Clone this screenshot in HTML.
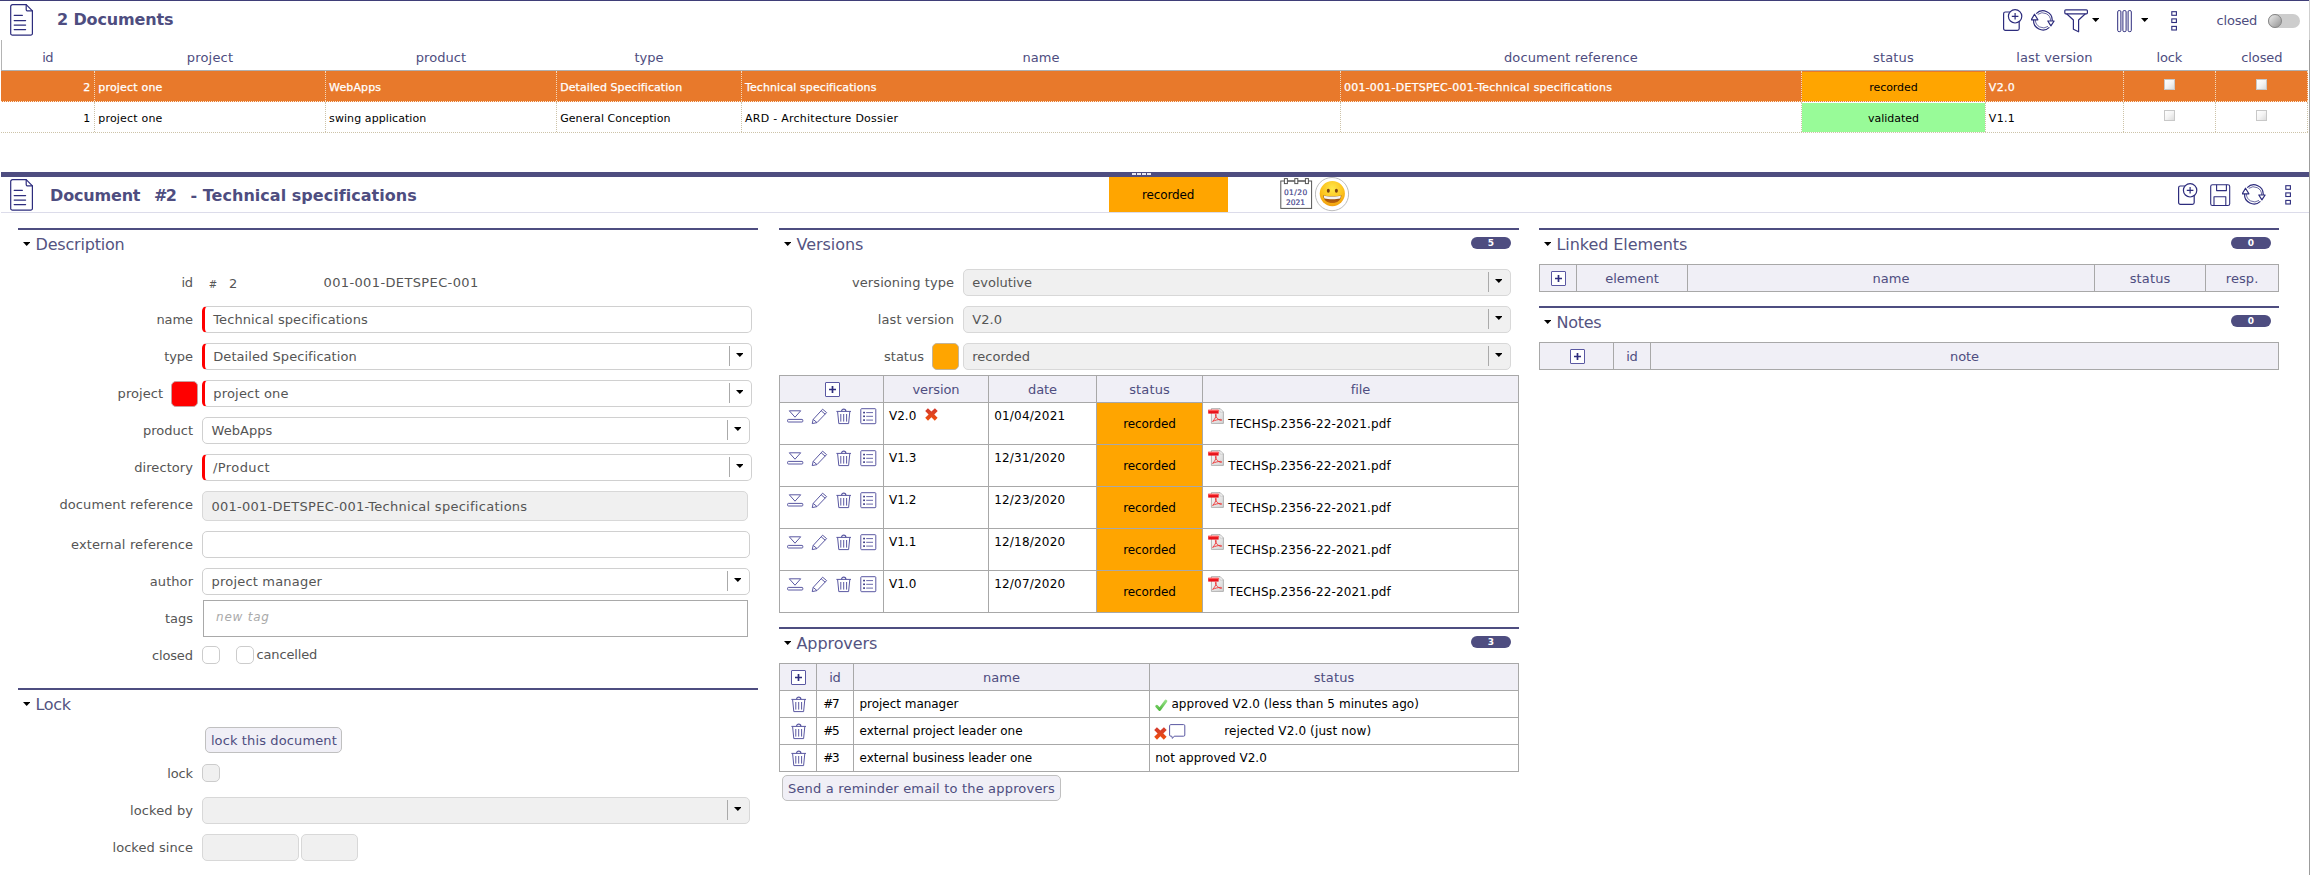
<!DOCTYPE html>
<html lang="en"><head><meta charset="utf-8"><title>Documents</title>
<style>
html,body{margin:0;padding:0;background:#fff;}
body{width:2310px;height:875px;position:relative;overflow:hidden;font-family:"DejaVu Sans","Liberation Sans",sans-serif;}
.t{position:absolute;white-space:pre;}
div,.a{position:absolute;box-sizing:border-box;}
.inp{border:1px solid #d0d0d0;border-radius:5px;background:#fff;}
.req{border-left:3px solid #f00;}
.ro{background:#f0f0f0;border-color:#d8d8d8;}
.sep{width:1px;background:#aaa;}
.arr{width:0;height:0;border-left:4px solid transparent;border-right:4px solid transparent;border-top:4px solid #000;}
.bar{background:#4e4d80;}
.badge{background:#4e4d80;border-radius:7px;color:#fff;font-size:9px;font-weight:bold;text-align:center;line-height:12px;}
.cell{border:1px solid #a6a6a6;background:#fff;}
.hd{background:#f0eff6;}
.btn{background:#f0eff6;border:1px solid #c0c0c0;border-radius:5px;}
.cb{border:1px solid #ccc;border-radius:5px;background:#fff;}
.lcb{border:1px solid #c8c8c8;background:linear-gradient(135deg,#fff 0%,#f4f4f4 50%,#dcdcdc 100%);}
</style></head><body>
<section aria-label="Documents list">
<div style="left:0px;top:0px;width:2309px;height:1px;background:#3f3e78;"></div>
<div style="left:2309px;top:0px;width:1px;height:40px;background:#cfcfcf;"></div>
<div style="left:2309px;top:40px;width:1px;height:835px;background:#9c9c9c;"></div>
<svg class="a" style="left:10px;top:4px" width="24" height="33" viewBox="0 0 24 33" ><g fill="none" stroke="#2d2c7d" stroke-width="1.2" stroke-linejoin="round" stroke-linecap="round">
<path d="M2.5,0.7H16.2L22.4,6.9V29.4a1.8,1.8 0 0 1 -1.8,1.8H2.5A1.8,1.8 0 0 1 0.7,29.4V2.5A1.8,1.8 0 0 1 2.5,0.7Z"/>
<path d="M16.2,0.7V5.4a1.5,1.5 0 0 0 1.5,1.5H22.4"/>
<path d="M4.2,11.3H12.4M4.2,16.6H15.6M4.2,21.1H15.6M4.2,25.6H15.6"/></g></svg>
<span class="t" style="left:57.0px;top:9px;font-size:16px;line-height:21px;color:#4e4d80;letter-spacing:-0.15px;font-weight:bold;">2 Documents</span>
<svg class="a" style="left:2002.8px;top:8.6px" width="21" height="24" viewBox="0 0 21 24" ><g fill="none" stroke="#2d2c7d" stroke-width="1.2">
<rect x="0.6" y="3" width="15.6" height="18.4" rx="1.8"/>
<circle cx="12.1" cy="7.3" r="6.7" fill="#fff"/>
<path d="M8.8,7.3H15.4M12.1,4V10.6"/></g></svg>
<svg class="a" style="left:2031px;top:9px" width="25" height="24" viewBox="0 0 25 24" ><g fill="none" stroke="#2d2c7d" stroke-width="1.2" stroke-linejoin="round">
<path d="M5.2,4.6A9.4,9.4 0 0 1 21.2,12"/>
<path d="M6.8,5.4A8,8 0 0 1 19.6,12" stroke-width="0.7"/>
<path d="M16.8,12H23.1L19.9,16.8Z" fill="#fff"/>
<path d="M18.4,18.4A9.4,9.4 0 0 1 2.6,10.8"/>
<path d="M17,17.4A8,8 0 0 1 4.4,10.8" stroke-width="0.7"/>
<path d="M0.3,10.8H6.9L3.5,5.2Z" fill="#fff"/></g></svg>
<svg class="a" style="left:2064.2px;top:9.3px" width="25" height="24" viewBox="0 0 25 24" ><g fill="none" stroke="#2d2c7d" stroke-width="1.2" stroke-linejoin="round">
<rect x="0.8" y="0.8" width="22.6" height="4" rx="1"/>
<path d="M2.6,4.8L9.4,11V20.2L14.6,22.8V11L21.4,4.8"/></g></svg>
<svg class="a" style="left:2092px;top:18.2px" width="7.4" height="3.9" viewBox="0 0 7.4 3.9" ><path d="M0,0H7.4L3.7,3.9Z" fill="#000"/></svg>
<svg class="a" style="left:2117.2px;top:10px" width="16" height="23" viewBox="0 0 16 23" ><g fill="none" stroke="#2d2c7d" stroke-width="1">
<rect x="0.7" y="0.6" width="3.2" height="21" rx="1.2"/><rect x="5.9" y="0.6" width="3.2" height="21" rx="1.2"/><rect x="11.1" y="0.6" width="3.2" height="21" rx="1.2"/></g></svg>
<svg class="a" style="left:2141px;top:18.2px" width="7.4" height="3.9" viewBox="0 0 7.4 3.9" ><path d="M0,0H7.4L3.7,3.9Z" fill="#000"/></svg>
<svg class="a" style="left:2170.6px;top:10.6px" width="7" height="21" viewBox="0 0 7 21" ><g fill="none" stroke="#2d2c7d" stroke-width="1.1">
<rect x="0.8" y="0.7" width="4.6" height="3.6"/><rect x="0.8" y="7.9" width="4.6" height="3.6"/><rect x="0.8" y="15.4" width="4.6" height="3.6"/></g></svg>
<span class="t" style="left:2216.5px;top:12px;font-size:13px;line-height:17px;color:#4e4d80;letter-spacing:-0.19px;">closed</span>
<div style="left:2268px;top:14px;width:32px;height:14px;background:#cdcdcd;border-radius:7px;"></div>
<div style="left:2268px;top:14px;width:14px;height:14px;border-radius:7px;background:linear-gradient(135deg,#e4e4e4 10%,#9c9c9c 90%);border:1px solid #858585;"></div>
<div style="left:1px;top:40px;width:1px;height:31px;background:#b4b4b4;"></div>
<div style="left:1px;top:70px;width:2307px;height:1px;background:#b0b0b0;"></div>
<span class="t" style="left:42.2px;top:49px;font-size:13px;line-height:17px;color:#4e4d80;letter-spacing:-0.46px;">id</span>
<span class="t" style="left:186.8px;top:49px;font-size:13px;line-height:17px;color:#4e4d80;letter-spacing:0.18px;">project</span>
<span class="t" style="left:415.8px;top:49px;font-size:13px;line-height:17px;color:#4e4d80;letter-spacing:0.03px;">product</span>
<span class="t" style="left:634.4px;top:49px;font-size:13px;line-height:17px;color:#4e4d80;letter-spacing:0.02px;">type</span>
<span class="t" style="left:1022.4px;top:49px;font-size:13px;line-height:17px;color:#4e4d80;letter-spacing:0.04px;">name</span>
<span class="t" style="left:1504.0px;top:49px;font-size:13px;line-height:17px;color:#4e4d80;letter-spacing:0.12px;">document reference</span>
<span class="t" style="left:1873.1px;top:49px;font-size:13px;line-height:17px;color:#4e4d80;letter-spacing:0.13px;">status</span>
<span class="t" style="left:2016.3px;top:49px;font-size:13px;line-height:17px;color:#4e4d80;letter-spacing:0.09px;">last version</span>
<span class="t" style="left:2156.4px;top:49px;font-size:13px;line-height:17px;color:#4e4d80;letter-spacing:-0.08px;">lock</span>
<span class="t" style="left:2241.2px;top:49px;font-size:13px;line-height:17px;color:#4e4d80;letter-spacing:-0.09px;">closed</span>
<div style="left:1px;top:71px;width:2307px;height:31px;background:#e8792b;"></div>
<div style="left:1802px;top:72px;width:183px;height:29px;background:#ffa500;"></div>
<div style="left:1802px;top:103px;width:183px;height:29px;background:#98fb98;"></div>
<div style="left:1px;top:101px;width:2307px;height:1px;border-top:1px dotted #fbe9d8;"></div>
<div style="left:1px;top:132px;width:2307px;height:1px;border-top:1px dotted #cdc3a8;"></div>
<div style="left:94px;top:71px;width:1px;height:30px;border-left:1px dotted #f3d9bd;"></div>
<div style="left:94px;top:102px;width:1px;height:30px;border-left:1px dotted #cdc3a8;"></div>
<div style="left:325px;top:71px;width:1px;height:30px;border-left:1px dotted #f3d9bd;"></div>
<div style="left:325px;top:102px;width:1px;height:30px;border-left:1px dotted #cdc3a8;"></div>
<div style="left:556px;top:71px;width:1px;height:30px;border-left:1px dotted #f3d9bd;"></div>
<div style="left:556px;top:102px;width:1px;height:30px;border-left:1px dotted #cdc3a8;"></div>
<div style="left:741px;top:71px;width:1px;height:30px;border-left:1px dotted #f3d9bd;"></div>
<div style="left:741px;top:102px;width:1px;height:30px;border-left:1px dotted #cdc3a8;"></div>
<div style="left:1340px;top:71px;width:1px;height:30px;border-left:1px dotted #f3d9bd;"></div>
<div style="left:1340px;top:102px;width:1px;height:30px;border-left:1px dotted #cdc3a8;"></div>
<div style="left:1801px;top:71px;width:1px;height:30px;border-left:1px dotted #f3d9bd;"></div>
<div style="left:1801px;top:102px;width:1px;height:30px;border-left:1px dotted #cdc3a8;"></div>
<div style="left:1985px;top:71px;width:1px;height:30px;border-left:1px dotted #f3d9bd;"></div>
<div style="left:1985px;top:102px;width:1px;height:30px;border-left:1px dotted #cdc3a8;"></div>
<div style="left:2123px;top:71px;width:1px;height:30px;border-left:1px dotted #f3d9bd;"></div>
<div style="left:2123px;top:102px;width:1px;height:30px;border-left:1px dotted #cdc3a8;"></div>
<div style="left:2215px;top:71px;width:1px;height:30px;border-left:1px dotted #f3d9bd;"></div>
<div style="left:2215px;top:102px;width:1px;height:30px;border-left:1px dotted #cdc3a8;"></div>
<div style="left:2307px;top:102px;width:1px;height:30px;border-left:1px dotted #cdc3a8;"></div>
<div style="left:2307px;top:71px;width:1px;height:30px;border-left:1px dotted #f3d9bd;"></div>
<span class="t" style="left:83.3px;top:81px;font-size:11px;line-height:14px;color:#ffffff;-webkit-text-stroke:0.25px #fff;">2</span>
<span class="t" style="left:98.3px;top:81px;font-size:11px;line-height:14px;color:#ffffff;letter-spacing:0.19px;-webkit-text-stroke:0.25px #fff;">project one</span>
<span class="t" style="left:329.1px;top:81px;font-size:11px;line-height:14px;color:#ffffff;letter-spacing:0.13px;-webkit-text-stroke:0.25px #fff;">WebApps</span>
<span class="t" style="left:560.2px;top:81px;font-size:11px;line-height:14px;color:#ffffff;letter-spacing:0.08px;-webkit-text-stroke:0.25px #fff;">Detailed Specification</span>
<span class="t" style="left:745.0px;top:81px;font-size:11px;line-height:14px;color:#ffffff;letter-spacing:0.10px;-webkit-text-stroke:0.25px #fff;">Technical specifications</span>
<span class="t" style="left:1343.9px;top:81px;font-size:11px;line-height:14px;color:#ffffff;letter-spacing:0.25px;-webkit-text-stroke:0.25px #fff;">001-001-DETSPEC-001-Technical specifications</span>
<span class="t" style="left:1869.3px;top:81px;font-size:11px;line-height:14px;color:#000000;letter-spacing:-0.07px;">recorded</span>
<span class="t" style="left:1988.8px;top:81px;font-size:11px;line-height:14px;color:#ffffff;letter-spacing:0.33px;-webkit-text-stroke:0.25px #fff;">V2.0</span>
<span class="t" style="left:83.3px;top:112px;font-size:11px;line-height:14px;color:#000000;">1</span>
<span class="t" style="left:98.3px;top:112px;font-size:11px;line-height:14px;color:#000000;letter-spacing:0.19px;">project one</span>
<span class="t" style="left:329.1px;top:112px;font-size:11px;line-height:14px;color:#000000;letter-spacing:0.08px;">swing application</span>
<span class="t" style="left:560.2px;top:112px;font-size:11px;line-height:14px;color:#000000;letter-spacing:0.07px;">General Conception</span>
<span class="t" style="left:745.0px;top:112px;font-size:11px;line-height:14px;color:#000000;letter-spacing:0.26px;">ARD - Architecture Dossier</span>
<span class="t" style="left:1868.1px;top:112px;font-size:11px;line-height:14px;color:#000000;letter-spacing:-0.04px;">validated</span>
<span class="t" style="left:1988.8px;top:112px;font-size:11px;line-height:14px;color:#000000;letter-spacing:0.33px;">V1.1</span>
<div class="lcb" style="left:2164px;top:79px;width:11px;height:11px;"></div>
<div class="lcb" style="left:2256px;top:79px;width:11px;height:11px;"></div>
<div class="lcb" style="left:2164px;top:110px;width:11px;height:11px;"></div>
<div class="lcb" style="left:2256px;top:110px;width:11px;height:11px;"></div>
</section>
<section aria-label="Document detail header">
<div class="bar" style="left:1px;top:172px;width:2308px;height:5px;"></div>
<div style="left:1132px;top:173px;width:4px;height:2px;background:#e9e9f2;"></div>
<div style="left:1137px;top:173px;width:4px;height:2px;background:#e9e9f2;"></div>
<div style="left:1142px;top:173px;width:4px;height:2px;background:#e9e9f2;"></div>
<div style="left:1147px;top:173px;width:4px;height:2px;background:#e9e9f2;"></div>
<svg class="a" style="left:10px;top:179px" width="24" height="33" viewBox="0 0 24 33" ><g fill="none" stroke="#2d2c7d" stroke-width="1.2" stroke-linejoin="round" stroke-linecap="round">
<path d="M2.5,0.7H16.2L22.4,6.9V29.4a1.8,1.8 0 0 1 -1.8,1.8H2.5A1.8,1.8 0 0 1 0.7,29.4V2.5A1.8,1.8 0 0 1 2.5,0.7Z"/>
<path d="M16.2,0.7V5.4a1.5,1.5 0 0 0 1.5,1.5H22.4"/>
<path d="M4.2,11.3H12.4M4.2,16.6H15.6M4.2,21.1H15.6M4.2,25.6H15.6"/></g></svg>
<span class="t" style="left:50.1px;top:185px;font-size:16px;line-height:21px;color:#4e4d80;letter-spacing:-0.19px;font-weight:bold;">Document</span>
<span class="t" style="left:153.9px;top:185px;font-size:16px;line-height:21px;color:#4e4d80;letter-spacing:-1.44px;font-weight:bold;">#2</span>
<span class="t" style="left:190.5px;top:185px;font-size:16px;line-height:21px;color:#4e4d80;letter-spacing:0.03px;font-weight:bold;">- Technical specifications</span>
<div style="left:1109px;top:177px;width:119px;height:35px;background:#ffa500;"></div>
<span class="t" style="left:1142.1px;top:187px;font-size:12px;line-height:16px;color:#000000;letter-spacing:-0.16px;">recorded</span>
<svg class="a" style="left:1280px;top:177.6px" width="33" height="32" viewBox="0 0 33 32" ><g fill="#fff" stroke="#555" stroke-width="1">
<rect x="0.8" y="3" width="30.8" height="27.4"/>
<path d="M4.6,3H27.4" stroke="#555"/>
<rect x="4.4" y="0.6" width="3" height="5"/><rect x="14.8" y="0.6" width="3" height="5"/><rect x="25.4" y="0.6" width="3" height="5"/></g></svg>
<span class="t" style="left:1283.9px;top:188px;font-size:7.5px;line-height:10px;color:#45448c;letter-spacing:0.45px;-webkit-text-stroke:0.2px #45448c;">01/20</span>
<span class="t" style="left:1286.1px;top:198px;font-size:7.5px;line-height:10px;color:#45448c;letter-spacing:-0.03px;-webkit-text-stroke:0.2px #45448c;">2021</span>
<svg class="a" style="left:1315px;top:177px" width="35" height="35" viewBox="0 0 35 35" ><defs><radialGradient id="fg" cx="0.5" cy="0.3" r="0.8"><stop offset="0" stop-color="#ffe84a"/><stop offset="0.55" stop-color="#fcc21c"/><stop offset="1" stop-color="#ee9208"/></radialGradient>
<linearGradient id="mg" x1="0" y1="0" x2="0" y2="1"><stop offset="0" stop-color="#7a3d0c"/><stop offset="1" stop-color="#c0660e"/></linearGradient></defs>
<circle cx="17" cy="17.1" r="16.6" fill="#fff" stroke="#bdbdbd" stroke-width="1"/>
<circle cx="17.3" cy="16.6" r="12.6" fill="url(#fg)"/>
<ellipse cx="13.3" cy="13.7" rx="1.5" ry="2" fill="#7a4210"/><ellipse cx="21.4" cy="13.7" rx="1.5" ry="2" fill="#7a4210"/>
<path d="M8.2,18.2C11,19.6 23.6,19.6 26.4,18.2C26.2,23.2 22.3,26 17.3,26C12.3,26 8.4,23.2 8.2,18.2Z" fill="url(#mg)"/>
<path d="M8.7,18.6C11.4,19.9 23.2,19.9 25.9,18.6C25.8,19.8 25.6,20.6 25.2,21.4C21,22.4 13.6,22.4 9.4,21.4C9,20.6 8.8,19.8 8.7,18.6Z" fill="#f4f4f4"/></svg>
<svg class="a" style="left:2178.2px;top:182.6px" width="21" height="24" viewBox="0 0 21 24" ><g fill="none" stroke="#2d2c7d" stroke-width="1.2">
<rect x="0.6" y="3" width="15.6" height="18.4" rx="1.8"/>
<circle cx="12.1" cy="7.3" r="6.7" fill="#fff"/>
<path d="M8.8,7.3H15.4M12.1,4V10.6"/></g></svg>
<svg class="a" style="left:2210px;top:184px" width="21" height="23" viewBox="0 0 21 23" ><g fill="none" stroke="#2d2c7d" stroke-width="1.1" stroke-linejoin="round">
<rect x="0.7" y="0.7" width="19" height="20.8" rx="1.8"/>
<path d="M6.6,0.7V6.6H16.4V0.7"/><path d="M4,21.5V12.8H15.8V21.5"/></g></svg>
<svg class="a" style="left:2242px;top:183.2px" width="25" height="24" viewBox="0 0 25 24" ><g fill="none" stroke="#2d2c7d" stroke-width="1.2" stroke-linejoin="round">
<path d="M5.2,4.6A9.4,9.4 0 0 1 21.2,12"/>
<path d="M6.8,5.4A8,8 0 0 1 19.6,12" stroke-width="0.7"/>
<path d="M16.8,12H23.1L19.9,16.8Z" fill="#fff"/>
<path d="M18.4,18.4A9.4,9.4 0 0 1 2.6,10.8"/>
<path d="M17,17.4A8,8 0 0 1 4.4,10.8" stroke-width="0.7"/>
<path d="M0.3,10.8H6.9L3.5,5.2Z" fill="#fff"/></g></svg>
<svg class="a" style="left:2284.8px;top:185px" width="7" height="21" viewBox="0 0 7 21" ><g fill="none" stroke="#2d2c7d" stroke-width="1.1">
<rect x="0.8" y="0.7" width="4.6" height="3.6"/><rect x="0.8" y="7.9" width="4.6" height="3.6"/><rect x="0.8" y="15.4" width="4.6" height="3.6"/></g></svg>
<div style="left:1px;top:212px;width:2308px;height:1px;background:#dcdcea;"></div>
</section>
<section aria-label="Description">
<div class="bar" style="left:18px;top:228px;width:740px;height:2px;"></div>
<svg class="a" style="left:23px;top:242px" width="7.4" height="3.9" viewBox="0 0 7.4 3.9" ><path d="M0,0H7.4L3.7,3.9Z" fill="#000"/></svg>
<span class="t" style="left:35.5px;top:234px;font-size:16px;line-height:21px;color:#545381;letter-spacing:-0.19px;">Description</span>
<span class="t" style="left:181.5px;top:274px;font-size:13px;line-height:17px;color:#555555;letter-spacing:-0.36px;">id</span>
<span class="t" style="left:208.8px;top:278px;font-size:10px;line-height:13px;color:#555555;">#</span>
<span class="t" style="left:229.0px;top:275px;font-size:13px;line-height:17px;color:#555555;">2</span>
<span class="t" style="left:323.5px;top:274px;font-size:13px;line-height:17px;color:#555555;letter-spacing:0.37px;">001-001-DETSPEC-001</span>
<span class="t" style="left:156.4px;top:311px;font-size:13px;line-height:17px;color:#555555;letter-spacing:-0.09px;">name</span>
<div class="inp req" style="left:202px;top:306px;width:550px;height:27px;"></div>
<span class="t" style="left:213.3px;top:311px;font-size:13px;line-height:17px;color:#555555;letter-spacing:0.08px;">Technical specifications</span>
<span class="t" style="left:164.2px;top:348px;font-size:13px;line-height:17px;color:#555555;letter-spacing:-0.08px;">type</span>
<div class="inp req" style="left:202px;top:343px;width:550px;height:27px;"></div>
<div class="sep" style="left:729px;top:346px;width:1px;height:20px;"></div>
<svg class="a" style="left:735.6px;top:352.8px" width="7.6" height="4" viewBox="0 0 7.6 4" ><path d="M0,0H7.6L3.8,4Z" fill="#000"/></svg>
<span class="t" style="left:213.3px;top:348px;font-size:13px;line-height:17px;color:#555555;letter-spacing:0.06px;">Detailed Specification</span>
<span class="t" style="left:117.6px;top:385px;font-size:13px;line-height:17px;color:#555555;letter-spacing:0.05px;">project</span>
<div style="left:171px;top:381px;width:26.5px;height:26px;background:#f00;border:1px solid #c9a0a0;border-radius:5px;"></div>
<div class="inp req" style="left:202px;top:380px;width:550px;height:27px;"></div>
<div class="sep" style="left:729px;top:383px;width:1px;height:20px;"></div>
<svg class="a" style="left:735.6px;top:389.8px" width="7.6" height="4" viewBox="0 0 7.6 4" ><path d="M0,0H7.6L3.8,4Z" fill="#000"/></svg>
<span class="t" style="left:213.3px;top:385px;font-size:13px;line-height:17px;color:#555555;letter-spacing:0.18px;">project one</span>
<span class="t" style="left:142.9px;top:422px;font-size:13px;line-height:17px;color:#555555;letter-spacing:0.02px;">product</span>
<div class="inp" style="left:202px;top:417px;width:548px;height:27px;"></div>
<div class="sep" style="left:727px;top:420px;width:1px;height:20px;"></div>
<svg class="a" style="left:733.6px;top:426.8px" width="7.6" height="4" viewBox="0 0 7.6 4" ><path d="M0,0H7.6L3.8,4Z" fill="#000"/></svg>
<span class="t" style="left:211.6px;top:422px;font-size:13px;line-height:17px;color:#555555;letter-spacing:0.03px;">WebApps</span>
<span class="t" style="left:134.2px;top:459px;font-size:13px;line-height:17px;color:#555555;letter-spacing:0.08px;">directory</span>
<div class="inp req" style="left:202px;top:454px;width:550px;height:27px;"></div>
<div class="sep" style="left:729px;top:457px;width:1px;height:20px;"></div>
<svg class="a" style="left:735.6px;top:463.8px" width="7.6" height="4" viewBox="0 0 7.6 4" ><path d="M0,0H7.6L3.8,4Z" fill="#000"/></svg>
<span class="t" style="left:213.0px;top:459px;font-size:13px;line-height:17px;color:#555555;letter-spacing:0.41px;">/Product</span>
<span class="t" style="left:59.4px;top:496px;font-size:13px;line-height:17px;color:#555555;letter-spacing:0.11px;">document reference</span>
<div class="inp ro" style="left:202px;top:491px;width:546px;height:30px;"></div>
<span class="t" style="left:211.4px;top:498px;font-size:13px;line-height:17px;color:#555555;letter-spacing:0.27px;">001-001-DETSPEC-001-Technical specifications</span>
<span class="t" style="left:71.0px;top:536px;font-size:13px;line-height:17px;color:#555555;letter-spacing:0.14px;">external reference</span>
<div class="inp" style="left:202px;top:531px;width:548px;height:27px;"></div>
<span class="t" style="left:149.8px;top:573px;font-size:13px;line-height:17px;color:#555555;letter-spacing:0.07px;">author</span>
<div class="inp" style="left:202px;top:568px;width:548px;height:27px;"></div>
<div class="sep" style="left:727px;top:571px;width:1px;height:20px;"></div>
<svg class="a" style="left:733.6px;top:577.8px" width="7.6" height="4" viewBox="0 0 7.6 4" ><path d="M0,0H7.6L3.8,4Z" fill="#000"/></svg>
<span class="t" style="left:211.6px;top:573px;font-size:13px;line-height:17px;color:#555555;letter-spacing:0.19px;">project manager</span>
<span class="t" style="left:165.0px;top:610px;font-size:13px;line-height:17px;color:#555555;letter-spacing:-0.03px;">tags</span>
<div style="left:203px;top:600px;width:545px;height:37px;border:1px solid #a9a9a9;background:#fff;"></div>
<span class="t" style="left:216.0px;top:609px;font-size:12px;line-height:16px;color:#aaaaaa;letter-spacing:0.78px;font-style:italic;">new tag</span>
<span class="t" style="left:151.9px;top:647px;font-size:13px;line-height:17px;color:#555555;letter-spacing:-0.13px;">closed</span>
<div class="cb" style="left:202px;top:646px;width:18px;height:18px;"></div>
<div class="cb" style="left:236px;top:646px;width:18px;height:18px;"></div>
<span class="t" style="left:256.6px;top:646px;font-size:13px;line-height:17px;color:#555555;letter-spacing:-0.17px;">cancelled</span>
</section>
<section aria-label="Lock">
<div class="bar" style="left:18px;top:688px;width:740px;height:2px;"></div>
<svg class="a" style="left:23px;top:702px" width="7.4" height="3.9" viewBox="0 0 7.4 3.9" ><path d="M0,0H7.4L3.7,3.9Z" fill="#000"/></svg>
<span class="t" style="left:35.5px;top:694px;font-size:16px;line-height:21px;color:#545381;letter-spacing:-0.36px;">Lock</span>
<div class="btn" style="left:205px;top:727px;width:137px;height:26px;"></div>
<span class="t" style="left:210.9px;top:732px;font-size:13px;line-height:17px;color:#4e4d80;letter-spacing:0.12px;">lock this document</span>
<span class="t" style="left:167.2px;top:765px;font-size:13px;line-height:17px;color:#555555;letter-spacing:-0.15px;">lock</span>
<div class="cb" style="left:202px;top:764px;width:18px;height:18px;background:#f0f0f0;"></div>
<span class="t" style="left:130.0px;top:802px;font-size:13px;line-height:17px;color:#555555;letter-spacing:0.11px;">locked by</span>
<div class="inp ro" style="left:202px;top:797px;width:548px;height:27px;"></div>
<div class="sep" style="left:727px;top:800px;width:1px;height:20px;"></div>
<svg class="a" style="left:733.6px;top:806.8px" width="7.6" height="4" viewBox="0 0 7.6 4" ><path d="M0,0H7.6L3.8,4Z" fill="#000"/></svg>
<span class="t" style="left:112.5px;top:839px;font-size:13px;line-height:17px;color:#555555;letter-spacing:0.05px;">locked since</span>
<div class="inp ro" style="left:202px;top:834px;width:97px;height:27px;"></div>
<div class="inp ro" style="left:301px;top:834px;width:57px;height:27px;"></div>
</section>
<section aria-label="Versions">
<div class="bar" style="left:779px;top:228px;width:740px;height:2px;"></div>
<svg class="a" style="left:784px;top:242px" width="7.4" height="3.9" viewBox="0 0 7.4 3.9" ><path d="M0,0H7.4L3.7,3.9Z" fill="#000"/></svg>
<span class="t" style="left:796.5px;top:234px;font-size:16px;line-height:21px;color:#545381;letter-spacing:-0.04px;">Versions</span>
<div class="badge" style="left:1471px;top:237px;width:40px;height:12px;">5</div>
<span class="t" style="left:852.0px;top:274px;font-size:13px;line-height:17px;color:#555555;letter-spacing:0.08px;">versioning type</span>
<div class="inp ro" style="left:963px;top:269px;width:548px;height:27px;"></div>
<div class="sep" style="left:1488px;top:272px;width:1px;height:20px;"></div>
<svg class="a" style="left:1494.6px;top:278.8px" width="7.6" height="4" viewBox="0 0 7.6 4" ><path d="M0,0H7.6L3.8,4Z" fill="#000"/></svg>
<span class="t" style="left:972.3px;top:274px;font-size:13px;line-height:17px;color:#555555;letter-spacing:-0.02px;">evolutive</span>
<span class="t" style="left:877.8px;top:311px;font-size:13px;line-height:17px;color:#555555;letter-spacing:0.09px;">last version</span>
<div class="inp ro" style="left:963px;top:306px;width:548px;height:27px;"></div>
<div class="sep" style="left:1488px;top:309px;width:1px;height:20px;"></div>
<svg class="a" style="left:1494.6px;top:315.8px" width="7.6" height="4" viewBox="0 0 7.6 4" ><path d="M0,0H7.6L3.8,4Z" fill="#000"/></svg>
<span class="t" style="left:972.3px;top:311px;font-size:13px;line-height:17px;color:#555555;letter-spacing:0.04px;">V2.0</span>
<span class="t" style="left:884.0px;top:348px;font-size:13px;line-height:17px;color:#555555;letter-spacing:0.01px;">status</span>
<div style="left:932px;top:343px;width:27px;height:27px;background:#ffa500;border:1px solid #c4b498;border-radius:5px;"></div>
<div class="inp ro" style="left:963px;top:343px;width:548px;height:27px;"></div>
<div class="sep" style="left:1488px;top:346px;width:1px;height:20px;"></div>
<svg class="a" style="left:1494.6px;top:352.8px" width="7.6" height="4" viewBox="0 0 7.6 4" ><path d="M0,0H7.6L3.8,4Z" fill="#000"/></svg>
<span class="t" style="left:972.3px;top:348px;font-size:13px;line-height:17px;color:#555555;">recorded</span>
<div style="left:779px;top:375px;width:740px;height:238px;background:#fff;"></div>
<div class="hd" style="left:779px;top:375px;width:740px;height:27px;"></div>
<div style="left:1097px;top:403px;width:105px;height:209px;background:#ffa500;"></div>
<div style="left:779px;top:375px;width:740px;height:1px;background:#a8a8a8;"></div>
<div style="left:779px;top:402px;width:740px;height:1px;background:#a8a8a8;"></div>
<div style="left:779px;top:444px;width:740px;height:1px;background:#a8a8a8;"></div>
<div style="left:779px;top:486px;width:740px;height:1px;background:#a8a8a8;"></div>
<div style="left:779px;top:528px;width:740px;height:1px;background:#a8a8a8;"></div>
<div style="left:779px;top:570px;width:740px;height:1px;background:#a8a8a8;"></div>
<div style="left:779px;top:612px;width:740px;height:1px;background:#a8a8a8;"></div>
<div style="left:779px;top:375px;width:1px;height:238px;background:#a8a8a8;"></div>
<div style="left:883px;top:375px;width:1px;height:238px;background:#a8a8a8;"></div>
<div style="left:988px;top:375px;width:1px;height:238px;background:#a8a8a8;"></div>
<div style="left:1096px;top:375px;width:1px;height:238px;background:#a8a8a8;"></div>
<div style="left:1202px;top:375px;width:1px;height:238px;background:#a8a8a8;"></div>
<div style="left:1518px;top:375px;width:1px;height:238px;background:#a8a8a8;"></div>
<div style="left:824.6px;top:381.6px;width:15px;height:15px;border:1px solid #5a58a2;background:#fff;border-radius:1px;"></div>
<svg class="a" style="left:824.6px;top:381.6px" width="15" height="15" viewBox="0 0 15 15" ><path d="M4,7.5H11M7.5,4V11" stroke="#2d2c7d" stroke-width="1.7" fill="none"/></svg>
<span class="t" style="left:912.5px;top:381px;font-size:13px;line-height:17px;color:#4e4d80;letter-spacing:-0.10px;">version</span>
<span class="t" style="left:1028.0px;top:381px;font-size:13px;line-height:17px;color:#4e4d80;letter-spacing:-0.10px;">date</span>
<span class="t" style="left:1129.2px;top:381px;font-size:13px;line-height:17px;color:#4e4d80;letter-spacing:0.13px;">status</span>
<span class="t" style="left:1350.8px;top:381px;font-size:13px;line-height:17px;color:#4e4d80;letter-spacing:-0.10px;">file</span>
<svg class="a" style="left:787px;top:410px" width="17" height="13" viewBox="0 0 17 13" ><g fill="none" stroke="#5a58a2" stroke-width="1" stroke-linejoin="round">
<path d="M2.3,0.8H13.7L8,7.2Z"/><rect x="0.6" y="9.4" width="15.2" height="2.6" rx="0.8"/></g></svg>
<svg class="a" style="left:811px;top:408.4px" width="17" height="17" viewBox="0 0 17 17" ><g fill="none" stroke="#5a58a2" stroke-width="1" stroke-linejoin="round">
<path d="M1.2,15.6L2.2,11.4L11.6,1.2L15.6,4.6L6,14.6Z"/><path d="M2.2,11.4L6,14.6"/><path d="M10.2,2.8L14.2,6.2"/></g></svg>
<svg class="a" style="left:836.4px;top:408.2px" width="16" height="17" viewBox="0 0 16 17" ><g fill="none" stroke="#5a58a2" stroke-width="1" stroke-linejoin="round">
<path d="M0.4,3.4H15"/><path d="M5.6,3.2C5.6,0.4 9.8,0.4 9.8,3.2" stroke-width="1.3"/>
<path d="M1.6,3.6L2.8,15.6H12.6L13.8,3.6"/>
<path d="M4.8,6V13.6M7.7,6V13.6M10.6,6V13.6"/></g></svg>
<svg class="a" style="left:859.6px;top:408px" width="17" height="17" viewBox="0 0 17 17" ><g fill="none" stroke="#5a58a2" stroke-width="1">
<rect x="0.8" y="0.7" width="15" height="15" rx="0.8"/>
<path d="M6.2,4.6H13M6.2,8.3H13M6.2,12.1H13" stroke-width="0.9"/></g>
<g fill="#2d2c7d"><rect x="3.2" y="3.8" width="1.7" height="1.6"/><rect x="3.2" y="7.5" width="1.7" height="1.6"/><rect x="3.2" y="11.3" width="1.7" height="1.6"/></g></svg>
<span class="t" style="left:889.0px;top:408px;font-size:12px;line-height:16px;color:#000000;">V2.0</span>
<svg class="a" style="left:924.6px;top:408.4px" width="13" height="13" viewBox="0 0 13 13" ><defs><linearGradient id="rx" x1="0" y1="0" x2="0" y2="1"><stop offset="0" stop-color="#d23a30"/><stop offset="1" stop-color="#f0500c"/></linearGradient></defs>
<path d="M2.9,0.3L6.4,3.6L9.9,0.3L12.7,3L9.3,6.4L12.6,9.8L9.8,12.7L6.4,9.3L3,12.7L0.2,9.8L3.6,6.4L0.2,3Z" fill="url(#rx)"/></svg>
<span class="t" style="left:994.2px;top:408px;font-size:12px;line-height:16px;color:#000000;letter-spacing:0.20px;">01/04/2021</span>
<span class="t" style="left:1123.3px;top:416px;font-size:12px;line-height:16px;color:#000000;letter-spacing:-0.12px;">recorded</span>
<svg class="a" style="left:1207.6px;top:408.2px" width="17" height="17" viewBox="0 0 17 17" ><defs><linearGradient id="pg" x1="0" y1="0" x2="1" y2="1"><stop offset="0" stop-color="#fdfdfd"/><stop offset="1" stop-color="#d4d4d4"/></linearGradient></defs>
<path d="M3.4,0.6H12L15.4,4V15.4H3.4Z" fill="url(#pg)" stroke="#9a9a9a" stroke-width="0.7"/>
<path d="M12,0.6V4H15.4Z" fill="#fff" stroke="#aaa" stroke-width="0.5"/>
<rect x="0.2" y="1.8" width="10.4" height="3.8" fill="#e8121a"/>
<rect x="0.2" y="1.8" width="10.4" height="1.3" fill="#ff5a5a"/>
<path d="M4.6,13.4C6.4,11.6 8.4,8.6 8.2,6.6C8,5.6 7.2,6 7.4,7C7.8,9.4 10.4,12 12.8,12.4C14.2,12.6 14,11.4 12.6,11.4C10,11.4 6.6,12.4 4.6,13.4Z" fill="none" stroke="#e33" stroke-width="0.9"/></svg>
<span class="t" style="left:1228.2px;top:416px;font-size:12px;line-height:16px;color:#000000;letter-spacing:0.13px;">TECHSp.2356-22-2021.pdf</span>
<svg class="a" style="left:787px;top:452px" width="17" height="13" viewBox="0 0 17 13" ><g fill="none" stroke="#5a58a2" stroke-width="1" stroke-linejoin="round">
<path d="M2.3,0.8H13.7L8,7.2Z"/><rect x="0.6" y="9.4" width="15.2" height="2.6" rx="0.8"/></g></svg>
<svg class="a" style="left:811px;top:450.4px" width="17" height="17" viewBox="0 0 17 17" ><g fill="none" stroke="#5a58a2" stroke-width="1" stroke-linejoin="round">
<path d="M1.2,15.6L2.2,11.4L11.6,1.2L15.6,4.6L6,14.6Z"/><path d="M2.2,11.4L6,14.6"/><path d="M10.2,2.8L14.2,6.2"/></g></svg>
<svg class="a" style="left:836.4px;top:450.2px" width="16" height="17" viewBox="0 0 16 17" ><g fill="none" stroke="#5a58a2" stroke-width="1" stroke-linejoin="round">
<path d="M0.4,3.4H15"/><path d="M5.6,3.2C5.6,0.4 9.8,0.4 9.8,3.2" stroke-width="1.3"/>
<path d="M1.6,3.6L2.8,15.6H12.6L13.8,3.6"/>
<path d="M4.8,6V13.6M7.7,6V13.6M10.6,6V13.6"/></g></svg>
<svg class="a" style="left:859.6px;top:450px" width="17" height="17" viewBox="0 0 17 17" ><g fill="none" stroke="#5a58a2" stroke-width="1">
<rect x="0.8" y="0.7" width="15" height="15" rx="0.8"/>
<path d="M6.2,4.6H13M6.2,8.3H13M6.2,12.1H13" stroke-width="0.9"/></g>
<g fill="#2d2c7d"><rect x="3.2" y="3.8" width="1.7" height="1.6"/><rect x="3.2" y="7.5" width="1.7" height="1.6"/><rect x="3.2" y="11.3" width="1.7" height="1.6"/></g></svg>
<span class="t" style="left:889.0px;top:450px;font-size:12px;line-height:16px;color:#000000;">V1.3</span>
<span class="t" style="left:994.2px;top:450px;font-size:12px;line-height:16px;color:#000000;letter-spacing:0.20px;">12/31/2020</span>
<span class="t" style="left:1123.3px;top:458px;font-size:12px;line-height:16px;color:#000000;letter-spacing:-0.12px;">recorded</span>
<svg class="a" style="left:1207.6px;top:450.2px" width="17" height="17" viewBox="0 0 17 17" ><defs><linearGradient id="pg" x1="0" y1="0" x2="1" y2="1"><stop offset="0" stop-color="#fdfdfd"/><stop offset="1" stop-color="#d4d4d4"/></linearGradient></defs>
<path d="M3.4,0.6H12L15.4,4V15.4H3.4Z" fill="url(#pg)" stroke="#9a9a9a" stroke-width="0.7"/>
<path d="M12,0.6V4H15.4Z" fill="#fff" stroke="#aaa" stroke-width="0.5"/>
<rect x="0.2" y="1.8" width="10.4" height="3.8" fill="#e8121a"/>
<rect x="0.2" y="1.8" width="10.4" height="1.3" fill="#ff5a5a"/>
<path d="M4.6,13.4C6.4,11.6 8.4,8.6 8.2,6.6C8,5.6 7.2,6 7.4,7C7.8,9.4 10.4,12 12.8,12.4C14.2,12.6 14,11.4 12.6,11.4C10,11.4 6.6,12.4 4.6,13.4Z" fill="none" stroke="#e33" stroke-width="0.9"/></svg>
<span class="t" style="left:1228.2px;top:458px;font-size:12px;line-height:16px;color:#000000;letter-spacing:0.13px;">TECHSp.2356-22-2021.pdf</span>
<svg class="a" style="left:787px;top:494px" width="17" height="13" viewBox="0 0 17 13" ><g fill="none" stroke="#5a58a2" stroke-width="1" stroke-linejoin="round">
<path d="M2.3,0.8H13.7L8,7.2Z"/><rect x="0.6" y="9.4" width="15.2" height="2.6" rx="0.8"/></g></svg>
<svg class="a" style="left:811px;top:492.4px" width="17" height="17" viewBox="0 0 17 17" ><g fill="none" stroke="#5a58a2" stroke-width="1" stroke-linejoin="round">
<path d="M1.2,15.6L2.2,11.4L11.6,1.2L15.6,4.6L6,14.6Z"/><path d="M2.2,11.4L6,14.6"/><path d="M10.2,2.8L14.2,6.2"/></g></svg>
<svg class="a" style="left:836.4px;top:492.2px" width="16" height="17" viewBox="0 0 16 17" ><g fill="none" stroke="#5a58a2" stroke-width="1" stroke-linejoin="round">
<path d="M0.4,3.4H15"/><path d="M5.6,3.2C5.6,0.4 9.8,0.4 9.8,3.2" stroke-width="1.3"/>
<path d="M1.6,3.6L2.8,15.6H12.6L13.8,3.6"/>
<path d="M4.8,6V13.6M7.7,6V13.6M10.6,6V13.6"/></g></svg>
<svg class="a" style="left:859.6px;top:492px" width="17" height="17" viewBox="0 0 17 17" ><g fill="none" stroke="#5a58a2" stroke-width="1">
<rect x="0.8" y="0.7" width="15" height="15" rx="0.8"/>
<path d="M6.2,4.6H13M6.2,8.3H13M6.2,12.1H13" stroke-width="0.9"/></g>
<g fill="#2d2c7d"><rect x="3.2" y="3.8" width="1.7" height="1.6"/><rect x="3.2" y="7.5" width="1.7" height="1.6"/><rect x="3.2" y="11.3" width="1.7" height="1.6"/></g></svg>
<span class="t" style="left:889.0px;top:492px;font-size:12px;line-height:16px;color:#000000;">V1.2</span>
<span class="t" style="left:994.2px;top:492px;font-size:12px;line-height:16px;color:#000000;letter-spacing:0.20px;">12/23/2020</span>
<span class="t" style="left:1123.3px;top:500px;font-size:12px;line-height:16px;color:#000000;letter-spacing:-0.12px;">recorded</span>
<svg class="a" style="left:1207.6px;top:492.2px" width="17" height="17" viewBox="0 0 17 17" ><defs><linearGradient id="pg" x1="0" y1="0" x2="1" y2="1"><stop offset="0" stop-color="#fdfdfd"/><stop offset="1" stop-color="#d4d4d4"/></linearGradient></defs>
<path d="M3.4,0.6H12L15.4,4V15.4H3.4Z" fill="url(#pg)" stroke="#9a9a9a" stroke-width="0.7"/>
<path d="M12,0.6V4H15.4Z" fill="#fff" stroke="#aaa" stroke-width="0.5"/>
<rect x="0.2" y="1.8" width="10.4" height="3.8" fill="#e8121a"/>
<rect x="0.2" y="1.8" width="10.4" height="1.3" fill="#ff5a5a"/>
<path d="M4.6,13.4C6.4,11.6 8.4,8.6 8.2,6.6C8,5.6 7.2,6 7.4,7C7.8,9.4 10.4,12 12.8,12.4C14.2,12.6 14,11.4 12.6,11.4C10,11.4 6.6,12.4 4.6,13.4Z" fill="none" stroke="#e33" stroke-width="0.9"/></svg>
<span class="t" style="left:1228.2px;top:500px;font-size:12px;line-height:16px;color:#000000;letter-spacing:0.13px;">TECHSp.2356-22-2021.pdf</span>
<svg class="a" style="left:787px;top:536px" width="17" height="13" viewBox="0 0 17 13" ><g fill="none" stroke="#5a58a2" stroke-width="1" stroke-linejoin="round">
<path d="M2.3,0.8H13.7L8,7.2Z"/><rect x="0.6" y="9.4" width="15.2" height="2.6" rx="0.8"/></g></svg>
<svg class="a" style="left:811px;top:534.4px" width="17" height="17" viewBox="0 0 17 17" ><g fill="none" stroke="#5a58a2" stroke-width="1" stroke-linejoin="round">
<path d="M1.2,15.6L2.2,11.4L11.6,1.2L15.6,4.6L6,14.6Z"/><path d="M2.2,11.4L6,14.6"/><path d="M10.2,2.8L14.2,6.2"/></g></svg>
<svg class="a" style="left:836.4px;top:534.2px" width="16" height="17" viewBox="0 0 16 17" ><g fill="none" stroke="#5a58a2" stroke-width="1" stroke-linejoin="round">
<path d="M0.4,3.4H15"/><path d="M5.6,3.2C5.6,0.4 9.8,0.4 9.8,3.2" stroke-width="1.3"/>
<path d="M1.6,3.6L2.8,15.6H12.6L13.8,3.6"/>
<path d="M4.8,6V13.6M7.7,6V13.6M10.6,6V13.6"/></g></svg>
<svg class="a" style="left:859.6px;top:534px" width="17" height="17" viewBox="0 0 17 17" ><g fill="none" stroke="#5a58a2" stroke-width="1">
<rect x="0.8" y="0.7" width="15" height="15" rx="0.8"/>
<path d="M6.2,4.6H13M6.2,8.3H13M6.2,12.1H13" stroke-width="0.9"/></g>
<g fill="#2d2c7d"><rect x="3.2" y="3.8" width="1.7" height="1.6"/><rect x="3.2" y="7.5" width="1.7" height="1.6"/><rect x="3.2" y="11.3" width="1.7" height="1.6"/></g></svg>
<span class="t" style="left:889.0px;top:534px;font-size:12px;line-height:16px;color:#000000;">V1.1</span>
<span class="t" style="left:994.2px;top:534px;font-size:12px;line-height:16px;color:#000000;letter-spacing:0.20px;">12/18/2020</span>
<span class="t" style="left:1123.3px;top:542px;font-size:12px;line-height:16px;color:#000000;letter-spacing:-0.12px;">recorded</span>
<svg class="a" style="left:1207.6px;top:534.2px" width="17" height="17" viewBox="0 0 17 17" ><defs><linearGradient id="pg" x1="0" y1="0" x2="1" y2="1"><stop offset="0" stop-color="#fdfdfd"/><stop offset="1" stop-color="#d4d4d4"/></linearGradient></defs>
<path d="M3.4,0.6H12L15.4,4V15.4H3.4Z" fill="url(#pg)" stroke="#9a9a9a" stroke-width="0.7"/>
<path d="M12,0.6V4H15.4Z" fill="#fff" stroke="#aaa" stroke-width="0.5"/>
<rect x="0.2" y="1.8" width="10.4" height="3.8" fill="#e8121a"/>
<rect x="0.2" y="1.8" width="10.4" height="1.3" fill="#ff5a5a"/>
<path d="M4.6,13.4C6.4,11.6 8.4,8.6 8.2,6.6C8,5.6 7.2,6 7.4,7C7.8,9.4 10.4,12 12.8,12.4C14.2,12.6 14,11.4 12.6,11.4C10,11.4 6.6,12.4 4.6,13.4Z" fill="none" stroke="#e33" stroke-width="0.9"/></svg>
<span class="t" style="left:1228.2px;top:542px;font-size:12px;line-height:16px;color:#000000;letter-spacing:0.13px;">TECHSp.2356-22-2021.pdf</span>
<svg class="a" style="left:787px;top:578px" width="17" height="13" viewBox="0 0 17 13" ><g fill="none" stroke="#5a58a2" stroke-width="1" stroke-linejoin="round">
<path d="M2.3,0.8H13.7L8,7.2Z"/><rect x="0.6" y="9.4" width="15.2" height="2.6" rx="0.8"/></g></svg>
<svg class="a" style="left:811px;top:576.4px" width="17" height="17" viewBox="0 0 17 17" ><g fill="none" stroke="#5a58a2" stroke-width="1" stroke-linejoin="round">
<path d="M1.2,15.6L2.2,11.4L11.6,1.2L15.6,4.6L6,14.6Z"/><path d="M2.2,11.4L6,14.6"/><path d="M10.2,2.8L14.2,6.2"/></g></svg>
<svg class="a" style="left:836.4px;top:576.2px" width="16" height="17" viewBox="0 0 16 17" ><g fill="none" stroke="#5a58a2" stroke-width="1" stroke-linejoin="round">
<path d="M0.4,3.4H15"/><path d="M5.6,3.2C5.6,0.4 9.8,0.4 9.8,3.2" stroke-width="1.3"/>
<path d="M1.6,3.6L2.8,15.6H12.6L13.8,3.6"/>
<path d="M4.8,6V13.6M7.7,6V13.6M10.6,6V13.6"/></g></svg>
<svg class="a" style="left:859.6px;top:576px" width="17" height="17" viewBox="0 0 17 17" ><g fill="none" stroke="#5a58a2" stroke-width="1">
<rect x="0.8" y="0.7" width="15" height="15" rx="0.8"/>
<path d="M6.2,4.6H13M6.2,8.3H13M6.2,12.1H13" stroke-width="0.9"/></g>
<g fill="#2d2c7d"><rect x="3.2" y="3.8" width="1.7" height="1.6"/><rect x="3.2" y="7.5" width="1.7" height="1.6"/><rect x="3.2" y="11.3" width="1.7" height="1.6"/></g></svg>
<span class="t" style="left:889.0px;top:576px;font-size:12px;line-height:16px;color:#000000;">V1.0</span>
<span class="t" style="left:994.2px;top:576px;font-size:12px;line-height:16px;color:#000000;letter-spacing:0.20px;">12/07/2020</span>
<span class="t" style="left:1123.3px;top:584px;font-size:12px;line-height:16px;color:#000000;letter-spacing:-0.12px;">recorded</span>
<svg class="a" style="left:1207.6px;top:576.2px" width="17" height="17" viewBox="0 0 17 17" ><defs><linearGradient id="pg" x1="0" y1="0" x2="1" y2="1"><stop offset="0" stop-color="#fdfdfd"/><stop offset="1" stop-color="#d4d4d4"/></linearGradient></defs>
<path d="M3.4,0.6H12L15.4,4V15.4H3.4Z" fill="url(#pg)" stroke="#9a9a9a" stroke-width="0.7"/>
<path d="M12,0.6V4H15.4Z" fill="#fff" stroke="#aaa" stroke-width="0.5"/>
<rect x="0.2" y="1.8" width="10.4" height="3.8" fill="#e8121a"/>
<rect x="0.2" y="1.8" width="10.4" height="1.3" fill="#ff5a5a"/>
<path d="M4.6,13.4C6.4,11.6 8.4,8.6 8.2,6.6C8,5.6 7.2,6 7.4,7C7.8,9.4 10.4,12 12.8,12.4C14.2,12.6 14,11.4 12.6,11.4C10,11.4 6.6,12.4 4.6,13.4Z" fill="none" stroke="#e33" stroke-width="0.9"/></svg>
<span class="t" style="left:1228.2px;top:584px;font-size:12px;line-height:16px;color:#000000;letter-spacing:0.13px;">TECHSp.2356-22-2021.pdf</span>
</section>
<section aria-label="Approvers">
<div class="bar" style="left:779px;top:627px;width:740px;height:2px;"></div>
<svg class="a" style="left:784px;top:641px" width="7.4" height="3.9" viewBox="0 0 7.4 3.9" ><path d="M0,0H7.4L3.7,3.9Z" fill="#000"/></svg>
<span class="t" style="left:796.5px;top:633px;font-size:16px;line-height:21px;color:#545381;letter-spacing:-0.08px;">Approvers</span>
<div class="badge" style="left:1471px;top:636px;width:40px;height:12px;">3</div>
<div style="left:779px;top:663px;width:740px;height:109px;background:#fff;"></div>
<div class="hd" style="left:779px;top:663px;width:740px;height:27px;"></div>
<div style="left:779px;top:663px;width:740px;height:1px;background:#a8a8a8;"></div>
<div style="left:779px;top:690px;width:740px;height:1px;background:#a8a8a8;"></div>
<div style="left:779px;top:717px;width:740px;height:1px;background:#a8a8a8;"></div>
<div style="left:779px;top:744px;width:740px;height:1px;background:#a8a8a8;"></div>
<div style="left:779px;top:771px;width:740px;height:1px;background:#a8a8a8;"></div>
<div style="left:779px;top:663px;width:1px;height:109px;background:#a8a8a8;"></div>
<div style="left:816px;top:663px;width:1px;height:109px;background:#a8a8a8;"></div>
<div style="left:853px;top:663px;width:1px;height:109px;background:#a8a8a8;"></div>
<div style="left:1149px;top:663px;width:1px;height:109px;background:#a8a8a8;"></div>
<div style="left:1518px;top:663px;width:1px;height:109px;background:#a8a8a8;"></div>
<div style="left:790.6px;top:670px;width:15px;height:15px;border:1px solid #5a58a2;background:#fff;border-radius:1px;"></div>
<svg class="a" style="left:790.6px;top:670px" width="15" height="15" viewBox="0 0 15 15" ><path d="M4,7.5H11M7.5,4V11" stroke="#2d2c7d" stroke-width="1.7" fill="none"/></svg>
<span class="t" style="left:829.3px;top:669px;font-size:13px;line-height:17px;color:#4e4d80;letter-spacing:-0.46px;">id</span>
<span class="t" style="left:983.0px;top:669px;font-size:13px;line-height:17px;color:#4e4d80;letter-spacing:0.04px;">name</span>
<span class="t" style="left:1313.7px;top:669px;font-size:13px;line-height:17px;color:#4e4d80;letter-spacing:0.13px;">status</span>
<svg class="a" style="left:790.8px;top:696.4px" width="16" height="17" viewBox="0 0 16 17" ><g fill="none" stroke="#5a58a2" stroke-width="1" stroke-linejoin="round">
<path d="M0.4,3.4H15"/><path d="M5.6,3.2C5.6,0.4 9.8,0.4 9.8,3.2" stroke-width="1.3"/>
<path d="M1.6,3.6L2.8,15.6H12.6L13.8,3.6"/>
<path d="M4.8,6V13.6M7.7,6V13.6M10.6,6V13.6"/></g></svg>
<span class="t" style="left:823.3px;top:696px;font-size:12px;line-height:16px;color:#000000;letter-spacing:-1.29px;">#7</span>
<span class="t" style="left:859.5px;top:696px;font-size:12px;line-height:16px;color:#000000;letter-spacing:-0.03px;">project manager</span>
<svg class="a" style="left:790.8px;top:723.4px" width="16" height="17" viewBox="0 0 16 17" ><g fill="none" stroke="#5a58a2" stroke-width="1" stroke-linejoin="round">
<path d="M0.4,3.4H15"/><path d="M5.6,3.2C5.6,0.4 9.8,0.4 9.8,3.2" stroke-width="1.3"/>
<path d="M1.6,3.6L2.8,15.6H12.6L13.8,3.6"/>
<path d="M4.8,6V13.6M7.7,6V13.6M10.6,6V13.6"/></g></svg>
<span class="t" style="left:823.3px;top:723px;font-size:12px;line-height:16px;color:#000000;letter-spacing:-1.29px;">#5</span>
<span class="t" style="left:859.5px;top:723px;font-size:12px;line-height:16px;color:#000000;letter-spacing:0.01px;">external project leader one</span>
<svg class="a" style="left:790.8px;top:750.4px" width="16" height="17" viewBox="0 0 16 17" ><g fill="none" stroke="#5a58a2" stroke-width="1" stroke-linejoin="round">
<path d="M0.4,3.4H15"/><path d="M5.6,3.2C5.6,0.4 9.8,0.4 9.8,3.2" stroke-width="1.3"/>
<path d="M1.6,3.6L2.8,15.6H12.6L13.8,3.6"/>
<path d="M4.8,6V13.6M7.7,6V13.6M10.6,6V13.6"/></g></svg>
<span class="t" style="left:823.3px;top:750px;font-size:12px;line-height:16px;color:#000000;letter-spacing:-1.29px;">#3</span>
<span class="t" style="left:859.5px;top:750px;font-size:12px;line-height:16px;color:#000000;letter-spacing:-0.03px;">external business leader one</span>
<svg class="a" style="left:1154.8px;top:698.7px" width="13" height="13" viewBox="0 0 13 13" ><defs><linearGradient id="gc" x1="0" y1="1" x2="0" y2="12" gradientUnits="userSpaceOnUse"><stop offset="0" stop-color="#9be58c"/><stop offset="1" stop-color="#48b336"/></linearGradient></defs>
<path d="M1.8,7.3L4.7,10.4L10.8,2.1" fill="none" stroke="url(#gc)" stroke-width="2.9" stroke-linecap="round" stroke-linejoin="round"/></svg>
<span class="t" style="left:1171.4px;top:696px;font-size:12px;line-height:16px;color:#000000;letter-spacing:0.06px;">approved V2.0 (less than 5 minutes ago)</span>
<svg class="a" style="left:1154.4px;top:726.5px" width="13" height="13" viewBox="0 0 13 13" ><defs><linearGradient id="rx" x1="0" y1="0" x2="0" y2="1"><stop offset="0" stop-color="#d23a30"/><stop offset="1" stop-color="#f0500c"/></linearGradient></defs>
<path d="M2.9,0.3L6.4,3.6L9.9,0.3L12.7,3L9.3,6.4L12.6,9.8L9.8,12.7L6.4,9.3L3,12.7L0.2,9.8L3.6,6.4L0.2,3Z" fill="url(#rx)"/></svg>
<svg class="a" style="left:1169px;top:723.6px" width="17" height="16" viewBox="0 0 17 16" ><path d="M1.8,0.6H14.6A1.2,1.2 0 0 1 15.8,1.8V11A1.2,1.2 0 0 1 14.6,12.2H5.2L3.4,14.4L2.8,12.2H1.8A1.2,1.2 0 0 1 0.6,11V1.8A1.2,1.2 0 0 1 1.8,0.6Z" fill="#fff" stroke="#5a58a2" stroke-width="1"/></svg>
<span class="t" style="left:1224.3px;top:723px;font-size:12px;line-height:16px;color:#000000;letter-spacing:0.13px;">rejected V2.0 (just now)</span>
<span class="t" style="left:1155.2px;top:750px;font-size:12px;line-height:16px;color:#000000;letter-spacing:0.02px;">not approved V2.0</span>
<div class="btn" style="left:782px;top:775px;width:279px;height:26px;"></div>
<span class="t" style="left:788.0px;top:780px;font-size:13px;line-height:17px;color:#4e4d80;letter-spacing:0.18px;">Send a reminder email to the approvers</span>
</section>
<section aria-label="Linked Elements">
<div class="bar" style="left:1539px;top:228px;width:740px;height:2px;"></div>
<svg class="a" style="left:1544px;top:242px" width="7.4" height="3.9" viewBox="0 0 7.4 3.9" ><path d="M0,0H7.4L3.7,3.9Z" fill="#000"/></svg>
<span class="t" style="left:1556.5px;top:234px;font-size:16px;line-height:21px;color:#545381;letter-spacing:-0.07px;">Linked Elements</span>
<div class="badge" style="left:2231px;top:237px;width:40px;height:12px;">0</div>
<div style="left:1539px;top:264px;width:740px;height:28px;background:#fff;"></div>
<div class="hd" style="left:1539px;top:264px;width:740px;height:27px;"></div>
<div style="left:1539px;top:264px;width:740px;height:1px;background:#a8a8a8;"></div>
<div style="left:1539px;top:291px;width:740px;height:1px;background:#a8a8a8;"></div>
<div style="left:1539px;top:264px;width:1px;height:28px;background:#a8a8a8;"></div>
<div style="left:1576px;top:264px;width:1px;height:28px;background:#a8a8a8;"></div>
<div style="left:1687px;top:264px;width:1px;height:28px;background:#a8a8a8;"></div>
<div style="left:2094px;top:264px;width:1px;height:28px;background:#a8a8a8;"></div>
<div style="left:2205px;top:264px;width:1px;height:28px;background:#a8a8a8;"></div>
<div style="left:2278px;top:264px;width:1px;height:28px;background:#a8a8a8;"></div>
<div style="left:1550.6px;top:270.6px;width:15px;height:15px;border:1px solid #5a58a2;background:#fff;border-radius:1px;"></div>
<svg class="a" style="left:1550.6px;top:270.6px" width="15" height="15" viewBox="0 0 15 15" ><path d="M4,7.5H11M7.5,4V11" stroke="#2d2c7d" stroke-width="1.7" fill="none"/></svg>
<span class="t" style="left:1605.3px;top:270px;font-size:13px;line-height:17px;color:#4e4d80;letter-spacing:-0.03px;">element</span>
<span class="t" style="left:1872.5px;top:270px;font-size:13px;line-height:17px;color:#4e4d80;letter-spacing:0.04px;">name</span>
<span class="t" style="left:2129.7px;top:270px;font-size:13px;line-height:17px;color:#4e4d80;letter-spacing:0.13px;">status</span>
<span class="t" style="left:2225.8px;top:270px;font-size:13px;line-height:17px;color:#4e4d80;letter-spacing:0.07px;">resp.</span>
</section>
<section aria-label="Notes">
<div class="bar" style="left:1539px;top:306px;width:740px;height:2px;"></div>
<svg class="a" style="left:1544px;top:320px" width="7.4" height="3.9" viewBox="0 0 7.4 3.9" ><path d="M0,0H7.4L3.7,3.9Z" fill="#000"/></svg>
<span class="t" style="left:1556.5px;top:312px;font-size:16px;line-height:21px;color:#545381;letter-spacing:-0.30px;">Notes</span>
<div class="badge" style="left:2231px;top:315px;width:40px;height:12px;">0</div>
<div style="left:1539px;top:342px;width:740px;height:28px;background:#fff;"></div>
<div class="hd" style="left:1539px;top:342px;width:740px;height:27px;"></div>
<div style="left:1539px;top:342px;width:740px;height:1px;background:#a8a8a8;"></div>
<div style="left:1539px;top:369px;width:740px;height:1px;background:#a8a8a8;"></div>
<div style="left:1539px;top:342px;width:1px;height:28px;background:#a8a8a8;"></div>
<div style="left:1613px;top:342px;width:1px;height:28px;background:#a8a8a8;"></div>
<div style="left:1650px;top:342px;width:1px;height:28px;background:#a8a8a8;"></div>
<div style="left:2278px;top:342px;width:1px;height:28px;background:#a8a8a8;"></div>
<div style="left:1569.6px;top:348.6px;width:15px;height:15px;border:1px solid #5a58a2;background:#fff;border-radius:1px;"></div>
<svg class="a" style="left:1569.6px;top:348.6px" width="15" height="15" viewBox="0 0 15 15" ><path d="M4,7.5H11M7.5,4V11" stroke="#2d2c7d" stroke-width="1.7" fill="none"/></svg>
<span class="t" style="left:1626.3px;top:348px;font-size:13px;line-height:17px;color:#4e4d80;letter-spacing:-0.46px;">id</span>
<span class="t" style="left:1950.0px;top:348px;font-size:13px;line-height:17px;color:#4e4d80;letter-spacing:-0.10px;">note</span>
</section>
</body></html>
